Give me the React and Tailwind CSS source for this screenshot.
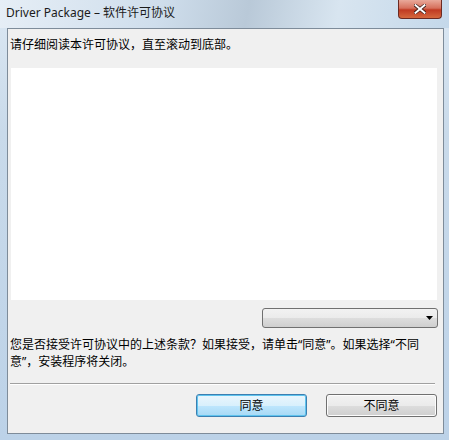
export default function App() {
  const cjk = { fontFamily: '"Segoe UI", "Noto Sans", "Noto Sans CJK SC", sans-serif' };
  return (
    <div
      className="w-[449px] h-[440px] flex flex-col overflow-hidden bg-[linear-gradient(180deg,#dce8f3_0%,#c9daea_30%,#bcd2e8_100%)]"
      style={cjk}
    >
      {/* title bar */}
      <div className="h-[28px] flex items-start relative bg-[linear-gradient(100deg,#e6eef6_0%,#cfdeec_35%,#b9c9d8_55%,#d8e5f0_75%,#c4d8ea_100%)]">
        <div className="pl-[6px] pt-[5px] text-[12px] leading-[16px] text-[#1b1b1b]">Driver Package – 软件许可协议</div>
        <div className="absolute right-[7px] top-0 w-[44px] h-[19px] rounded-b-[4px] border border-t-0 border-[#6b2a22] bg-[linear-gradient(180deg,#e9a99a_0%,#d6705c_45%,#c03a22_55%,#d5683d_100%)] flex items-center justify-center">
          <svg width="12" height="10" viewBox="0 0 12 10">
            <path d="M1 1 L11 9 M11 1 L1 9" stroke="#3a1a14" strokeWidth="3.4" strokeLinecap="square" />
            <path d="M1.5 1.2 L10.5 8.8 M10.5 1.2 L1.5 8.8" stroke="#ffffff" strokeWidth="2" strokeLinecap="square" />
          </svg>
        </div>
      </div>
      {/* client */}
      <div className="flex-1 flex pl-[7px] pr-[5px] pb-[6px]">
        <div className="w-[437px] border border-[#7e8c9a] bg-[#f0f0f0] flex flex-col text-[12px] leading-[17px] text-black">
          <div className="pl-[2px] pt-[7px] h-[39px]">请仔细阅读本许可协议，直至滚动到底部。</div>
          <div className="ml-[3px] w-[426px] h-[232px] bg-white"></div>
          <div className="flex justify-end pr-[5px] mt-[8px]">
            <div className="w-[176px] h-[20px] rounded-[3px] border border-[#707070] bg-[linear-gradient(180deg,#f2f2f2_0%,#ebebeb_50%,#dddddd_51%,#cfcfcf_100%)] flex items-center justify-end pr-[4px]">
              <svg width="7" height="4" viewBox="0 0 7 4"><path d="M0 0 H7 L3.5 4 Z" fill="#000" /></svg>
            </div>
          </div>
          <div className="pl-[2px] mt-[8px] leading-[17px]">
            <div className="whitespace-nowrap">您是否接受许可协议中的上述条款？如果接受，请单击“同意”。如果选择“不同</div>
            <div className="whitespace-nowrap">意”，安装程序将关闭。</div>
          </div>
          <div className="mt-[13px] ml-[2px] w-[425px] h-[2px] border-t border-[#a0a0a0] border-b border-b-white"></div>
          <div className="flex justify-end gap-[19px] pr-[6px] mt-[9px]">
            <button className="w-[111px] h-[23px] rounded-[3px] border border-[#3c7fb1] bg-[linear-gradient(180deg,#eaf6fd_0%,#d9f0fc_50%,#bee6fd_51%,#a7d9f5_100%)] shadow-[inset_0_0_0_1px_#5fc4ee] text-[12px] text-black">同意</button>
            <button className="w-[111px] h-[23px] rounded-[3px] border border-[#707070] bg-[linear-gradient(180deg,#f2f2f2_0%,#ebebeb_50%,#dddddd_51%,#cfcfcf_100%)] shadow-[inset_0_0_0_1px_#fcfcfc] text-[12px] text-black">不同意</button>
          </div>
        </div>
      </div>
    </div>
  );
}
